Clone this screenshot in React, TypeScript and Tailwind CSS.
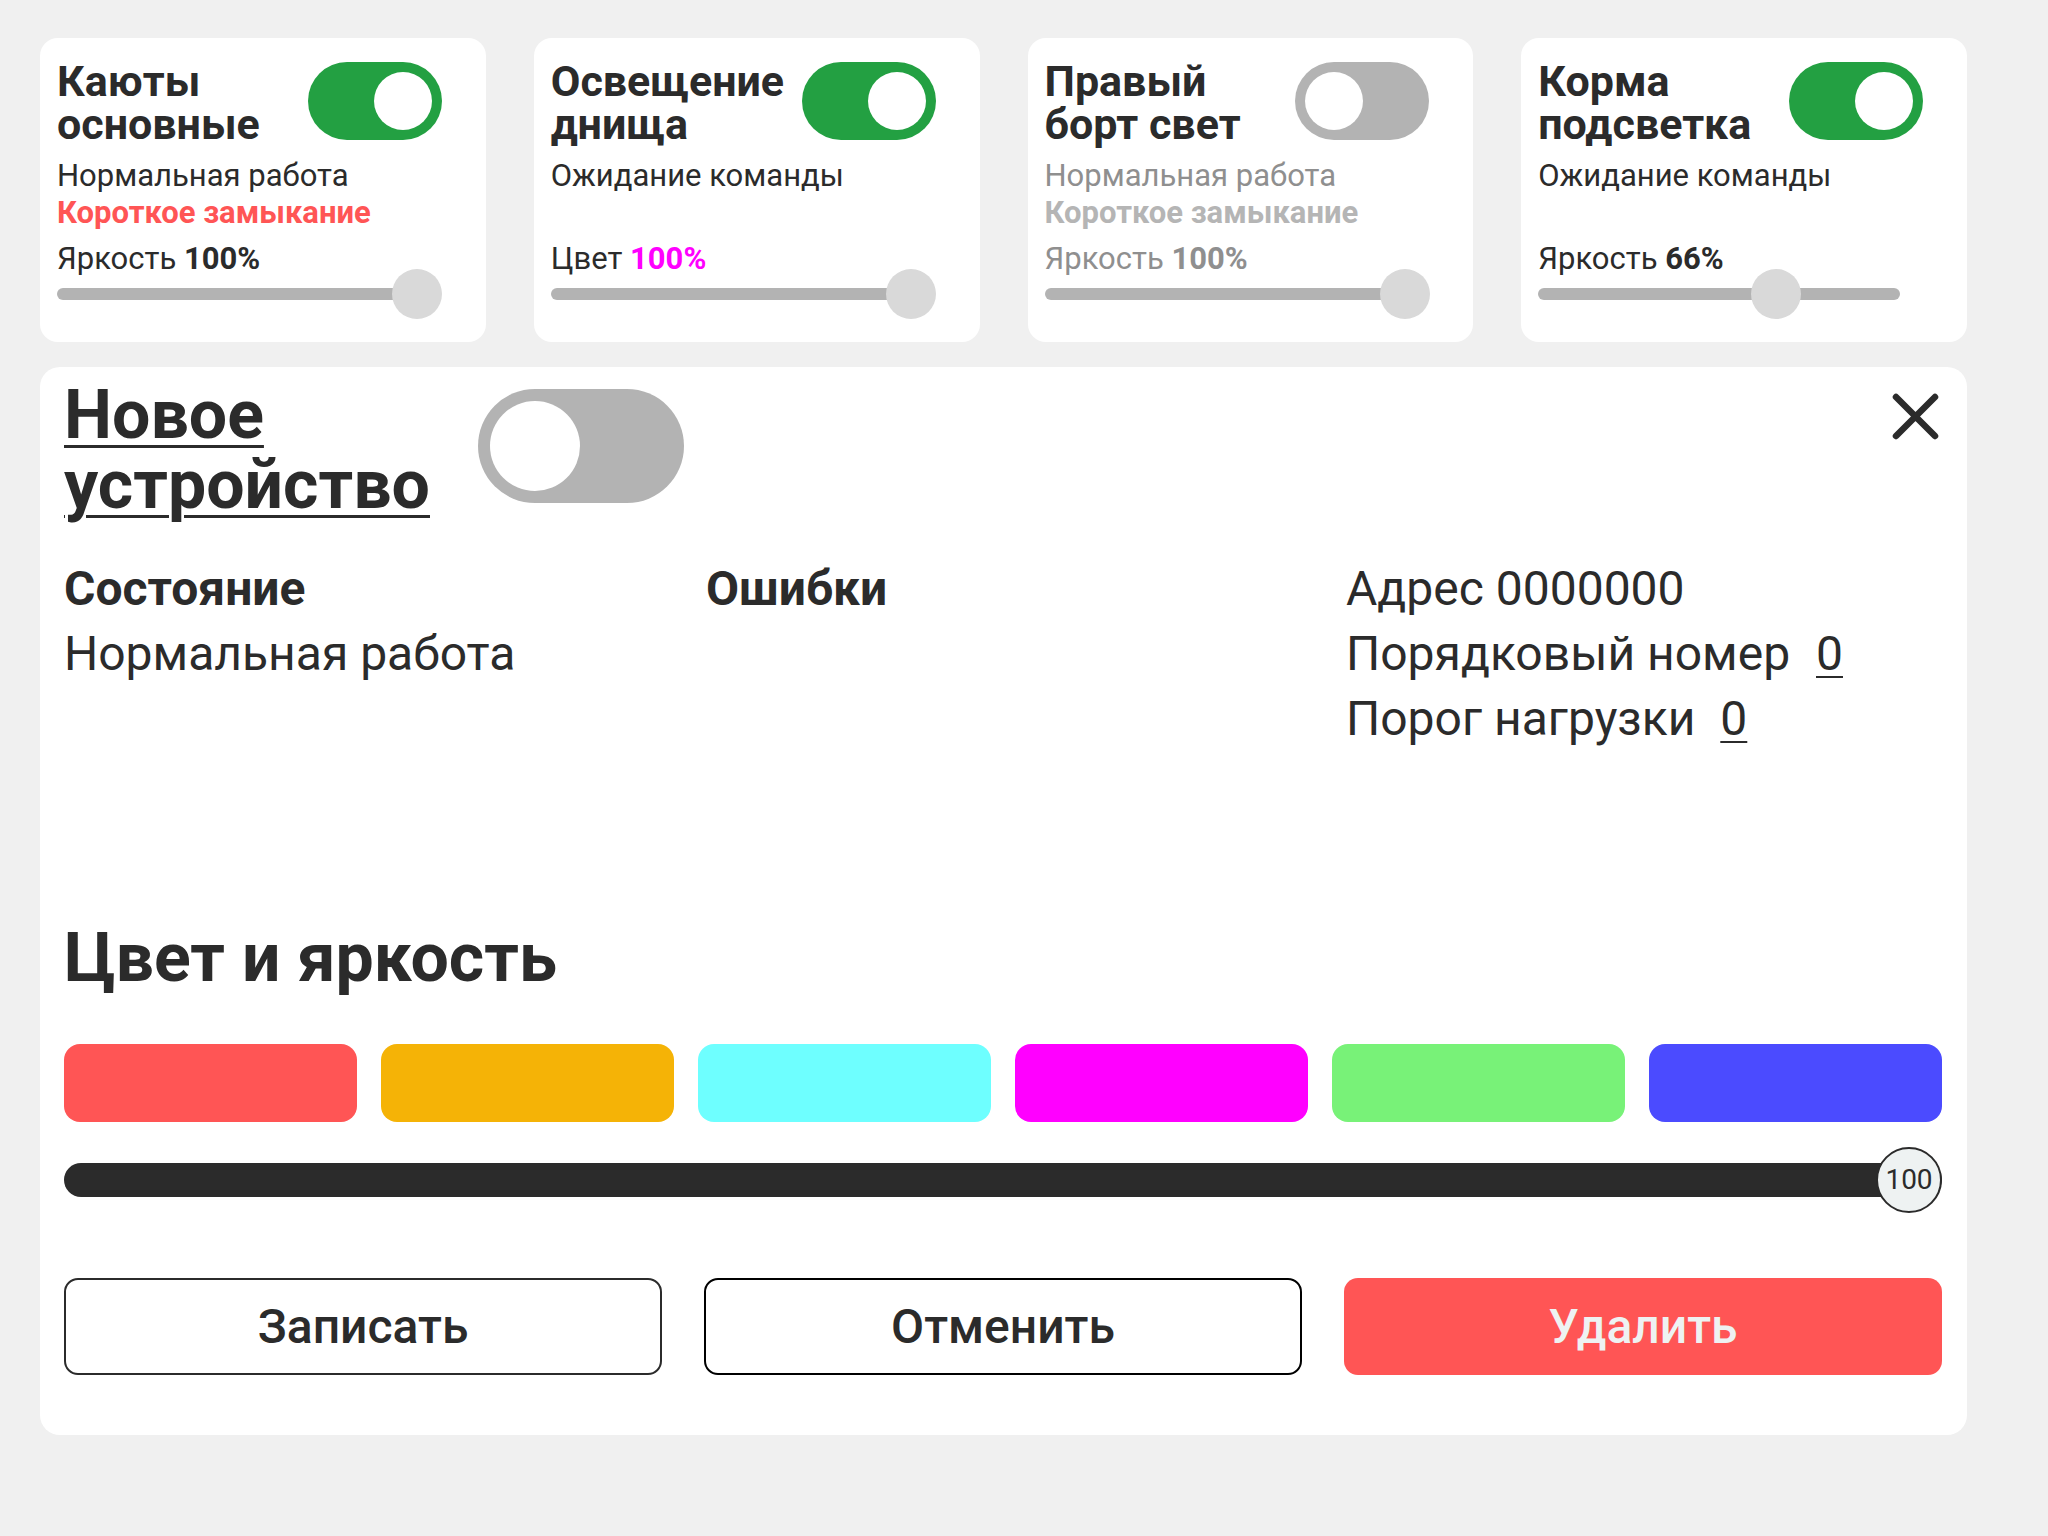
import React from 'react';

type Card = {
  title: [string, string];
  on: boolean;
  status: string;
  error?: string;
  label: string;
  value: number;
  magenta?: boolean;
  disabled?: boolean;
};

const CARDS: Card[] = [
  { title: ['Каюты', 'основные'], on: true, status: 'Нормальная работа', error: 'Короткое замыкание', label: 'Яркость', value: 100 },
  { title: ['Освещение', 'днища'], on: true, status: 'Ожидание команды', label: 'Цвет', value: 100, magenta: true },
  { title: ['Правый', 'борт свет'], on: false, status: 'Нормальная работа', error: 'Короткое замыкание', label: 'Яркость', value: 100, disabled: true },
  { title: ['Корма', 'подсветка'], on: true, status: 'Ожидание команды', label: 'Яркость', value: 66 },
];

const SWATCHES = ['bg-[#ff5555]', 'bg-[#f5b306]', 'bg-[#6effff]', 'bg-[#ff00ff]', 'bg-[#78f278]', 'bg-[#4b4bff]'];

function Toggle({ on }: { on: boolean }) {
  return (
    <div
      className={`flex h-[78px] w-[134px] rounded-full p-[10px] ${
        on ? 'justify-end bg-[#23a042]' : 'justify-start bg-[#b3b3b3]'
      }`}
    >
      <div className="h-[58px] w-[58px] rounded-full bg-white" />
    </div>
  );
}

function MiniSlider({ value }: { value: number }) {
  return (
    <div className="relative mt-[11px] h-[12px] w-[362px] rounded-full bg-[#b3b3b3]">
      {/* thumb */}
      <div
        className="absolute top-[-19px] h-[50px] w-[50px] rounded-full bg-[#d9d9d9]"
        style={{ left: `${(value / 100) * 360 - 25}px` }}
      />
    </div>
  );
}

function DeviceCard({ card }: { card: Card }) {
  const muted = card.disabled;
  return (
    <div className="h-[304px] rounded-[18px] bg-white pl-[17px] pr-[44px] pt-[22px]">
      <div className="flex items-start justify-between">
        <h2 className="text-[43px] font-bold leading-[43px]">
          {card.title[0]}
          <br />
          {card.title[1]}
        </h2>
        <div className="mt-[2px]">
          <Toggle on={card.on} />
        </div>
      </div>

      <div className={`mt-[11px] text-[31px] leading-[37px] ${muted ? 'text-[#8f8f8f]' : ''}`}>
        <div>{card.status}</div>
        <div className={`h-[37px] font-bold ${muted ? 'text-[#b5b5b5]' : 'text-[#ff5555]'}`}>{card.error}</div>
        <div className="mt-[9px]">
          {card.label}{' '}
          <span className={`font-bold ${card.magenta ? 'text-[#ff00ff]' : ''}`}>{card.value}%</span>
        </div>
      </div>

      <MiniSlider value={card.value} />
    </div>
  );
}

export default function App() {
  return (
    <div className="min-h-screen bg-[#f0f0f0] pl-[40px] pt-[38px] font-['Roboto',sans-serif] text-[#2b2b2b]">
      {/* Device cards */}
      <div className="grid w-[1927px] grid-cols-4 gap-[48px]">
        {CARDS.map((c) => (
          <DeviceCard key={c.title.join(' ')} card={c} />
        ))}
      </div>

      {/* New device panel */}
      <div className="mt-[25px] w-[1927px] rounded-[20px] bg-white pb-[60px] pl-[24px] pr-[25px] pt-[13px]">
        <div className="flex items-start">
          <h1 className="text-[68px] font-bold leading-[70px] underline decoration-[3px] underline-offset-[7px]">
            Новое
            <br />
            устройство
          </h1>
          <div className="ml-[48px] mt-[9px] flex h-[114px] w-[206px] justify-start rounded-full bg-[#b3b3b3] p-[12px]">
            <div className="h-[90px] w-[90px] rounded-full bg-white" />
          </div>
          <button className="ml-auto mr-[3px] mt-[13px]" title="Закрыть">
            <svg width="47" height="47" viewBox="0 0 47 47" fill="none" stroke="#2b2b2b" strokeWidth="6.5" strokeLinecap="round">
              <path d="M4 4L43 43M43 4L4 43" />
            </svg>
          </button>
        </div>

        {/* Info */}
        <div className="mt-[36px] grid h-[195px] grid-cols-[600px_598px_1fr] gap-x-[42px] text-[48px] leading-[65px]">
          <div>
            <div className="font-bold">Состояние</div>
            <div>Нормальная работа</div>
          </div>
          <div>
            <div className="font-bold">Ошибки</div>
          </div>
          <div>
            <div>Адрес 0000000</div>
            <div>
              Порядковый номер <span className="ml-[14px] underline decoration-2 underline-offset-[6px]">0</span>
            </div>
            <div>
              Порог нагрузки <span className="ml-[13px] underline decoration-2 underline-offset-[6px]">0</span>
            </div>
          </div>
        </div>

        {/* Colour and brightness */}
        <h2 className="mt-[167px] text-[68px] font-bold leading-[80px]">Цвет и яркость</h2>

        <div className="mt-[46px] grid grid-cols-6 gap-[24px]">
          {SWATCHES.map((s) => (
            <button key={s} className={`h-[78px] rounded-[16px] ${s}`} />
          ))}
        </div>

        <div className="relative mt-[25px] flex h-[66px] items-center">
          <div className="h-[34px] w-full rounded-full bg-[#2b2b2b]" />
          <div className="absolute right-0 top-0 flex h-[66px] w-[66px] items-center justify-center rounded-full border-2 border-[#2b2b2b] bg-[#eef2f2] text-[28px]">
            100
          </div>
        </div>

        {/* Actions */}
        <div className="mt-[65px] grid grid-cols-3 gap-[42px] text-[48px] font-medium">
          <button className="h-[97px] rounded-[14px] border-2 border-[#2b2b2b] bg-white">Записать</button>
          <button className="h-[97px] rounded-[14px] border-2 border-black bg-white">Отменить</button>
          <button className="h-[97px] rounded-[14px] bg-[#ff5555] text-[#eef2f2]">Удалить</button>
        </div>
      </div>
    </div>
  );
}
